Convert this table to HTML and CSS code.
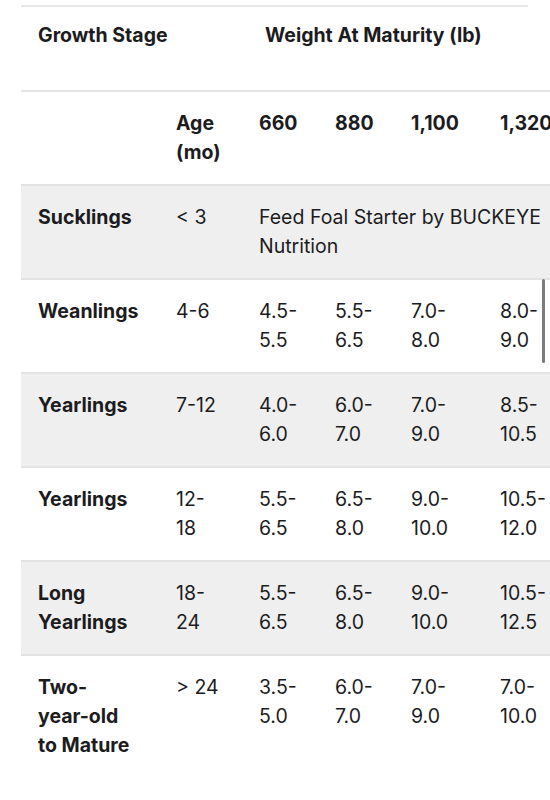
FILE: index.html
```html
<!DOCTYPE html>
<html lang="en">
<head>
<meta charset="utf-8">
<title>Feeding Chart</title>
<link rel="stylesheet" href="styles.css">
</head>
<body>
<div class="page">
  <div class="topline"></div>
  <div class="scroller">
    <table class="chart">
      <colgroup>
        <col class="c-stage">
        <col class="c-age">
        <col class="c-w1">
        <col class="c-w2">
        <col class="c-w3">
        <col class="c-w4">
        <col class="c-w5">
      </colgroup>
      <thead>
        <tr class="head1">
          <th>Growth Stage</th>
          <th></th>
          <th colspan="5" class="weight">Weight At Maturity (lb)</th>
        </tr>
        <tr class="head2">
          <th></th>
          <th>Age<br>(mo)</th>
          <th>660</th>
          <th>880</th>
          <th>1,100</th>
          <th>1,320</th>
          <th>1,540</th>
        </tr>
      </thead>
      <tbody>
        <tr class="shade">
          <th>Sucklings</th>
          <td>&lt; 3</td>
          <td colspan="4" class="wrap">Feed Foal Starter by BUCKEYE Nutrition</td>
          <td></td>
        </tr>
        <tr>
          <th>Weanlings</th>
          <td>4-6</td>
          <td>4.5-<br>5.5</td>
          <td>5.5-<br>6.5</td>
          <td>7.0-<br>8.0</td>
          <td>8.0-<br>9.0</td>
          <td>9.0-<br>10.0</td>
        </tr>
        <tr class="shade">
          <th>Yearlings</th>
          <td>7-12</td>
          <td>4.0-<br>6.0</td>
          <td>6.0-<br>7.0</td>
          <td>7.0-<br>9.0</td>
          <td>8.5-<br>10.5</td>
          <td>9.5-<br>11.5</td>
        </tr>
        <tr>
          <th>Yearlings</th>
          <td>12-<br>18</td>
          <td>5.5-<br>6.5</td>
          <td>6.5-<br>8.0</td>
          <td>9.0-<br>10.0</td>
          <td>10.5-<br>12.0</td>
          <td>11.5-<br>13.0</td>
        </tr>
        <tr class="shade">
          <th>Long<br>Yearlings</th>
          <td>18-<br>24</td>
          <td>5.5-<br>6.5</td>
          <td>6.5-<br>8.0</td>
          <td>9.0-<br>10.0</td>
          <td>10.5-<br>12.5</td>
          <td>11.5-<br>13.5</td>
        </tr>
        <tr class="last">
          <th>Two-<br>year-old<br>to Mature</th>
          <td>&gt; 24</td>
          <td>3.5-<br>5.0</td>
          <td>6.0-<br>7.0</td>
          <td>7.0-<br>9.0</td>
          <td>7.0-<br>10.0</td>
          <td>8.0-<br>11.0</td>
        </tr>
      </tbody>
    </table>
  </div>
  <div class="scrollbar"></div>
</div>
</body>
</html>
```

FILE: styles.css
```css
html, body {
  margin: 0;
  padding: 0;
  background: #ffffff;
}

body {
  font-family: Inter, "Noto Sans", "Liberation Sans", sans-serif;
  color: #1c1c1e;
  font-size: 19.5px;
}

.page {
  position: relative;
  width: 550px;
  height: 800px;
  overflow: hidden;
}

.topline {
  margin: 5px 0 0 21px;
  width: 507px;
  height: 2px;
  background: #e6e6e6;
}

.scroller {
  margin-left: 21px;
  overflow: hidden;
}

.chart {
  border-collapse: collapse;
  table-layout: fixed;
  width: 650px;
}

.c-stage { width: 138px; }
.c-age { width: 83px; }
.c-w1 { width: 76px; }
.c-w2 { width: 76px; }
.c-w3 { width: 89px; }
.c-w4 { width: 94px; }
.c-w5 { width: 94px; }

.chart th,
.chart td {
  padding: 17px 17px;
  line-height: 29px;
  text-align: left;
  vertical-align: top;
  white-space: nowrap;
}

.chart td.wrap {
  white-space: normal;
}

.chart th {
  font-weight: 700;
}

.chart td {
  font-weight: 400;
}

.chart tr {
  border-bottom: 2px solid #e4e4e4;
}

.chart tr.last {
  border-bottom: none;
}

.head1 th {
  padding-top: 14px;
  height: 52px;
}

.head1 .weight {
  padding-left: 23px;
}

.shade {
  background: #efefef;
}

.scrollbar {
  position: absolute;
  left: 542px;
  top: 279px;
  width: 3px;
  height: 84px;
  border-radius: 2px;
  background: #7c7c7c;
}
```
